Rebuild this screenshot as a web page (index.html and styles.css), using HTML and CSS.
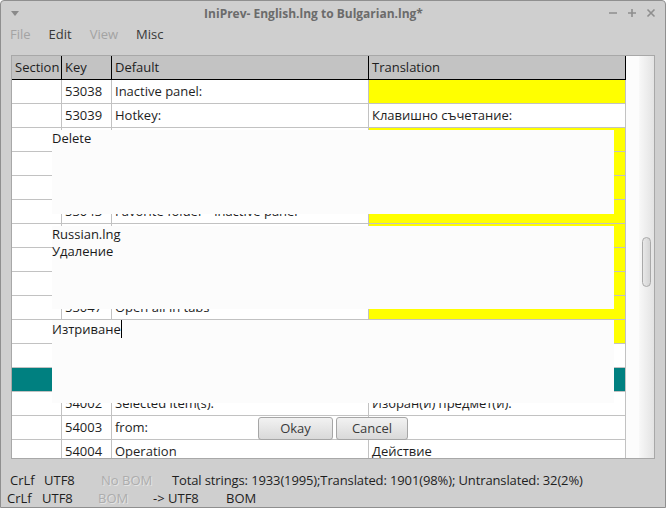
FILE: index.html
```html
<!DOCTYPE html>
<html lang="en">
<head>
  <meta charset="UTF-8">
  <title>IniPrev- English.lng to Bulgarian.lng*</title>
  <link rel="stylesheet" href="styles.css">
</head>
<body>
  <div class="window">
    <div class="titlebar">
      <svg class="wm-menu" width="8" height="5" viewBox="0 0 8 5"><path d="M0 0h8L4 5z" fill="#8a8a8a"/></svg>
      <span class="title">IniPrev- English.lng to Bulgarian.lng*</span>
      <div class="wm-buttons">
        <svg width="10" height="10" viewBox="0 0 10 10"><path d="M1 5h8" stroke="#8e8e8e" stroke-width="1.6"/></svg>
        <svg width="10" height="10" viewBox="0 0 10 10"><path d="M1 5h8M5 1v8" stroke="#8e8e8e" stroke-width="1.6"/></svg>
        <svg width="10" height="10" viewBox="0 0 10 10"><path d="M1.5 1.5l7 7M8.5 1.5l-7 7" stroke="#8e8e8e" stroke-width="1.6"/></svg>
      </div>
    </div>

    <div class="menubar">
      <span class="menu off">File</span>
      <span class="menu">Edit</span>
      <span class="menu off">View</span>
      <span class="menu">Misc</span>
    </div>

    <div class="view">
      <div class="grid">
        <div class="row head">
          <span>Section</span><span>Key</span><span>Default</span><span>Translation</span>
        </div>
        <div class="row"><span></span><span>53038</span><span>Inactive panel:</span><span class="missing"></span></div>
        <div class="row"><span></span><span>53039</span><span>Hotkey:</span><span>Клавишно съчетание:</span></div>
        <div class="row"><span></span><span>53040</span><span></span><span class="missing"></span></div>
        <div class="row"><span></span><span>53041</span><span></span><span class="missing"></span></div>
        <div class="row"><span></span><span>53042</span><span></span><span class="missing"></span></div>
        <div class="row"><span></span><span>53043</span><span>Favorite folder - inactive panel</span><span class="missing"></span></div>
        <div class="row"><span></span><span>53044</span><span></span><span class="missing"></span></div>
        <div class="row"><span></span><span>53045</span><span></span><span class="missing"></span></div>
        <div class="row"><span></span><span>53046</span><span></span><span class="missing"></span></div>
        <div class="row"><span></span><span>53047</span><span>Open all in tabs</span><span class="missing"></span></div>
        <div class="row"><span></span><span>53048</span><span></span><span class="missing"></span></div>
        <div class="row"><span></span><span>54000</span><span></span><span></span></div>
        <div class="row selected"><span></span><span>54001</span><span></span><span></span></div>
        <div class="row"><span></span><span>54002</span><span>Selected item(s).</span><span>Избран(и) предмет(и).</span></div>
        <div class="row"><span></span><span>54003</span><span>from:</span><span></span></div>
        <div class="row"><span></span><span>54004</span><span>Operation</span><span>Действие</span></div>
      </div>
      <div class="gutter"></div>
      <div class="scrollbar"><div class="thumb"></div></div>
    </div>

    <div class="status">
      <div class="line first">
        <span class="cell w34">CrLf</span><span class="cell w57">UTF8</span><span class="cell w71 off">No BOM</span><span class="totals">Total strings: 1933(1995);Translated: 1901(98%); Untranslated: 32(2%)</span>
      </div>
      <div class="line second">
        <span class="cell w35">CrLf</span><span class="cell w56">UTF8</span><span class="cell w55 off">BOM</span><span class="cell w73">-&gt; UTF8</span><span>BOM</span>
      </div>
    </div>

    <!-- editor pane drawn over the list -->
    <div class="pane pane-1"><div class="text">Delete</div></div>
    <div class="pane pane-2"><div class="text">Russian.lng</div><div class="text">Удаление</div></div>
    <div class="pane pane-3"><div class="text"><span class="caret">Изтриване</span></div></div>

    <button class="btn btn-ok">Okay</button>
    <button class="btn btn-cancel">Cancel</button>
  </div>
</body>
</html>
```

FILE: styles.css
```css
* { box-sizing: border-box; }
body {
  margin: 0;
  font-family: "Open Sans", "DejaVu Sans", sans-serif;
  font-size: 13px; color: #1e1e1e;
}
.window {
  position: relative; width: 666px; height: 508px; overflow: hidden;
  background: #cfcfcf; border: 1px solid #8f8f8f; border-radius: 4px 4px 0 0;
}

/* title bar */
.titlebar { display: flex; align-items: center; height: 24px; padding: 0 9px 0 10px; }
.wm-menu { flex: none; }
.title { flex: 1; text-align: center; font-size: 12px; font-weight: bold; color: #6b6b6b; }
.wm-buttons { display: flex; gap: 9px; align-items: center; }

/* menu */
.menubar { display: flex; height: 21px; align-items: center; padding: 0 0 3px 2px; }
.menu { padding: 0 7px; color: #383838; margin-right: 4px; }
.menu.off { color: #a3a3a3; }

/* list */
.view {
  display: flex; height: 404px; margin: 9px 10px 0;
  border: 1px solid #a8a8a8; background: #fcfcfc;
}
.grid { width: 614px; flex: none; overflow: hidden; background: #fff; }
.gutter { width: 13px; flex: none; background: #fcfcfc; }
.scrollbar {
  position: relative; flex: 1;
  background: linear-gradient(to right, #f8f8f8, #e3e3e3);
}
.thumb {
  position: absolute; left: 3px; top: 181px; width: 9px; height: 50px;
  border: 1px solid #a9a9a9; border-radius: 5px;
  background: linear-gradient(to right, #e8e8e8, #d4d4d4);
}
.row { display: grid; grid-template-columns: 50px 50px 257px 257px; height: 24px; }
.row span {
  display: block; padding-left: 3px; line-height: 23px; white-space: nowrap; overflow: hidden;
  border-right: 1px solid #c2c2c2; border-bottom: 1px solid #c2c2c2;
}
.row.head span { background: #c3c3c3; border-color: #000; }
.row span.missing { background: #ffff00; }
.row.selected span { background: #008080; color: #fff; }

/* status bar */
.status { padding-top: 12px; line-height: 18px; }
.line { display: flex; white-space: nowrap; }
.line.first { padding-left: 9px; }
.line.second { padding-left: 6px; }
.cell { flex: none; }
.w34 { width: 34px; } .w35 { width: 35px; } .w55 { width: 55px; } .w56 { width: 56px; }
.w57 { width: 57px; } .w71 { width: 71px; } .w73 { width: 73px; }
.totals { letter-spacing: -0.12px; }
.status .off { color: #adadad; text-shadow: 1px 1px 0 #e4e4e4; }

/* floating editor pane */
.pane { position: absolute; left: 51px; width: 562px; background: #fcfcfc; line-height: 17px; color: #1a1a1a; }
.pane-1 { top: 129px; height: 84px; }
.pane-2 { top: 225px; height: 83px; }
.pane-3 { top: 319px; height: 83px; padding-top: 1px; }
.caret { border-right: 1px solid #000; }

.btn {
  position: absolute; top: 416px; height: 23px; padding: 0 0 1px;
  font-family: inherit; font-size: 13px; color: #3a3a3a;
  border: 1px solid #a6a6a6; border-radius: 3px;
  background: linear-gradient(#f2f2f2, #d9d9d9);
}
.btn-ok { left: 257px; width: 75px; }
.btn-cancel { left: 335px; width: 72px; }
```
